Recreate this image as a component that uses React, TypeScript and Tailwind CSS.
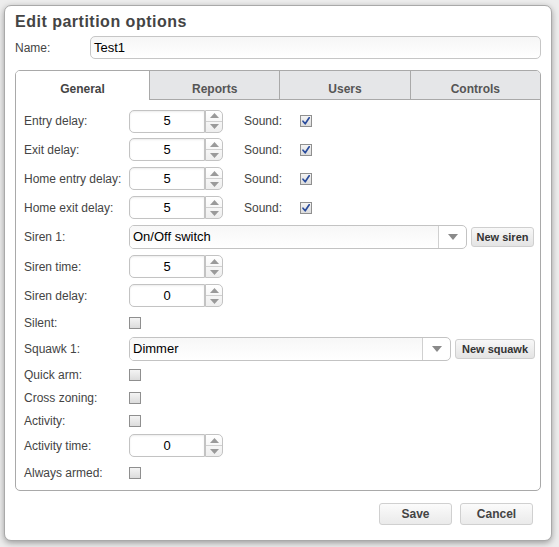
import React from "react";

const font = { fontFamily: '"Liberation Sans", Arial, sans-serif' };

function Check({ checked = false }: { checked?: boolean }) {
  return (
    <div className="w-[12px] h-[12px] border border-[#8f8f8f] bg-gradient-to-b from-[#f4f4f4] to-[#dcdcdc] flex items-center justify-center">
      {checked && (
        <svg width="10" height="10" viewBox="0 0 10 10">
          <path d="M2 5.2 L4.2 7.8 L8.2 1.8" fill="none" stroke="#2a4c9c" strokeWidth="1.7" strokeLinecap="round" strokeLinejoin="round" />
        </svg>
      )}
    </div>
  );
}

function Spinner({ value }: { value: string }) {
  return (
    <div className="flex items-stretch h-[23px]">
      <div className="w-[76px] border border-[#c3c3c3] rounded-l-[5px] bg-white flex items-center justify-center text-[13px] text-black shadow-[inset_0_1px_2px_rgba(0,0,0,0.08)]">
        {value}
      </div>
      <div className="w-[18px] border border-[#c3c3c3] rounded-r-[5px] bg-gradient-to-b from-white to-[#eeeeee] flex flex-col">
        <div className="flex-1 flex items-center justify-center border-b border-[#d0d0d0]">
          <svg width="9" height="5" viewBox="0 0 9 5"><path d="M0 5 L4.5 0 L9 5 Z" fill="#9a9a9a" /></svg>
        </div>
        <div className="flex-1 flex items-center justify-center">
          <svg width="9" height="5" viewBox="0 0 9 5"><path d="M0 0 L4.5 5 L9 0 Z" fill="#9a9a9a" /></svg>
        </div>
      </div>
    </div>
  );
}

function Select({ value, width }: { value: string; width: number }) {
  return (
    <div className="flex h-[24px] border border-[#c3c3c3] rounded-[5px] bg-white overflow-hidden" style={{ width }}>
      <div className="flex-1 flex items-center pl-[3px] text-[13px] text-black bg-gradient-to-b from-[#f7f7f7] to-white">{value}</div>
      <div className="w-[28px] border-l border-[#d0d0d0] flex items-center justify-center">
        <svg width="10" height="6" viewBox="0 0 10 6"><path d="M0 0 L5 6 L10 0 Z" fill="#8a8a8a" /></svg>
      </div>
    </div>
  );
}

function SmallBtn({ children, width }: { children: React.ReactNode; width: number }) {
  return (
    <div
      className="h-[20px] border border-[#cfcfcf] rounded-[3px] bg-gradient-to-b from-[#f8f8f8] to-[#e4e4e4] flex items-center justify-center text-[11px] font-bold text-[#333]"
      style={{ width }}
    >
      {children}
    </div>
  );
}

function Row({ label, h, children }: { label: string; h: number; children?: React.ReactNode }) {
  return (
    <div className="flex items-center" style={{ height: h }}>
      <div className="w-[105px] shrink-0 text-[12px] text-[#444]">{label}</div>
      {children}
    </div>
  );
}

function DelayRow({ label, h }: { label: string; h: number }) {
  return (
    <Row label={label} h={h}>
      <Spinner value="5" />
      <div className="ml-[21px] w-[56px] text-[12px] text-[#444]">Sound:</div>
      <Check checked />
    </Row>
  );
}

export default function App() {
  const tabs = ["General", "Reports", "Users", "Controls"];
  return (
    <div className="w-[559px] h-[547px] bg-[#ededed] pt-[5px] pl-[4px]" style={font}>
      <div className="w-[548px] h-[536px] bg-white border border-[#a9a9a9] rounded-[7px] shadow-[0_2px_6px_rgba(0,0,0,0.35)] px-[10px] pt-[6px] flex flex-col">
        <div className="h-[20px] flex items-center text-[16px] tracking-[0.5px] font-bold text-[#444]">Edit partition options</div>
        <div className="mt-[4px] flex items-center h-[23px]">
          <div className="w-[75px] text-[12px] text-[#444]">Name:</div>
          <div className="flex-1 h-[23px] border border-[#c6c6c6] rounded-[5px] flex items-center pl-[3px] text-[13px] text-black bg-gradient-to-b from-[#f6f6f6] to-white">
            Test1
          </div>
        </div>

        <div className="mt-[11px] h-[421px] border border-[#a9a9a9] rounded-[5px] flex flex-col overflow-hidden">
          <div className="flex h-[29px] shrink-0">
            {tabs.map((t, i) => (
              <div
                key={t}
                className={
                  i === 0
                    ? "w-[133px] bg-white flex items-center justify-center pt-[7px] text-[12px] font-bold text-[#444]"
                    : "flex-1 bg-[#e5e6e8] border-l border-b border-[#a9a9a9] flex items-center justify-center pt-[7px] text-[12px] font-bold text-[#555]"
                }
              >
                {t}
              </div>
            ))}
          </div>
          <div className="pl-[8px] pt-[7px] flex flex-col">
            <DelayRow label="Entry delay:" h={28} />
            <DelayRow label="Exit delay:" h={29} />
            <DelayRow label="Home entry delay:" h={29} />
            <DelayRow label="Home exit delay:" h={29} />
            <Row label="Siren 1:" h={30}>
              <Select value="On/Off switch" width={338} />
              <div className="ml-[4px]"><SmallBtn width={63}>New siren</SmallBtn></div>
            </Row>
            <Row label="Siren time:" h={29}><Spinner value="5" /></Row>
            <Row label="Siren delay:" h={29}><Spinner value="0" /></Row>
            <Row label="Silent:" h={25}><Check /></Row>
            <Row label="Squawk 1:" h={28}>
              <Select value="Dimmer" width={322} />
              <div className="ml-[4px]"><SmallBtn width={80}>New squawk</SmallBtn></div>
            </Row>
            <Row label="Quick arm:" h={23}><Check /></Row>
            <Row label="Cross zoning:" h={23}><Check /></Row>
            <Row label="Activity:" h={24}><Check /></Row>
            <Row label="Activity time:" h={25}><Spinner value="0" /></Row>
            <Row label="Always armed:" h={30}><Check /></Row>
          </div>
        </div>

        <div className="mt-[12px] flex justify-end gap-[8px] pr-[8px]">
          <div className="w-[73px] h-[22px] border border-[#d0d0d0] rounded-[3px] bg-gradient-to-b from-[#fbfbfb] to-[#eaeaea] flex items-center justify-center text-[12px] font-bold text-[#444]">Save</div>
          <div className="w-[73px] h-[22px] border border-[#d0d0d0] rounded-[3px] bg-gradient-to-b from-[#fbfbfb] to-[#eaeaea] flex items-center justify-center text-[12px] font-bold text-[#444]">Cancel</div>
        </div>
      </div>
    </div>
  );
}
